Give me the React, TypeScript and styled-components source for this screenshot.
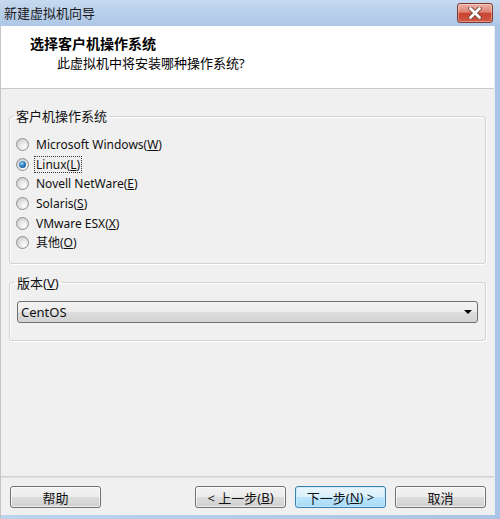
import React from "react";
import styled, { createGlobalStyle } from "styled-components";

const GlobalStyle = createGlobalStyle`
  html, body { margin: 0; padding: 0; background: #ffffff; }
  body { font-family: "Noto Sans", "Noto Sans CJK SC", sans-serif; color: #000; }
  * { box-sizing: border-box; }
`;

const Window = styled.div`
  width: 500px;
  height: 519px;
  display: flex;
  flex-direction: column;
  overflow: hidden;
`;

const TitleBar = styled.div`
  height: 26px;
  flex: none;
  display: flex;
  align-items: center;
  justify-content: space-between;
  padding: 0 7px 0 4px;
  background: linear-gradient(#c6d9ef 0%, #b9cfea 50%, #adc7e6 100%);
`;

const TitleText = styled.span`
  font-size: 13px;
  line-height: 16px;
  color: #1a1a1a;
`;

const CloseButton = styled.div`
  width: 36px;
  height: 20px;
  border: 1px solid #7e3a30;
  border-radius: 3px;
  display: grid;
  place-items: center;
  background: linear-gradient(#eab1a5 0%, #de8574 45%, #c9432f 52%, #cf5a45 100%);
  box-shadow: inset 0 0 0 1px rgba(255, 255, 255, 0.35);
`;

const Frame = styled.div`
  flex: 1;
  display: flex;
  border-left: 1px solid #c4c4c4;
  padding: 0 5px 4px 0;
  background: linear-gradient(90deg, #bcd3ec, #a9c4e4);
`;

const Client = styled.div`
  flex: 1;
  display: flex;
  flex-direction: column;
  background: #f0f0f0;
  border-right: 1px solid #e6edf5;
`;

const Header = styled.div`
  height: 63px;
  flex: none;
  background: #ffffff;
  border-bottom: 1px solid #c9c9c9;
  padding: 9px 0 0 29px;
`;

const HeaderTitle = styled.div`
  font-size: 14px;
  line-height: 17px;
  font-weight: bold;
`;

const HeaderSubtitle = styled.div`
  font-size: 13px;
  line-height: 16px;
  margin: 3px 0 0 27px;
`;

const Content = styled.div`
  flex: 1;
  display: flex;
  flex-direction: column;
  padding: 19px 8px 0 8px;
`;

const Group = styled.fieldset<{ $pad: string; $top: number }>`
  margin: ${(p) => p.$top}px 0 0 0;
  min-width: 0;
  border: 1px solid #d2d2d2;
  border-radius: 3px;
  box-shadow: inset 1px 1px 0 #ffffff, 1px 1px 0 #ffffff;
  padding: ${(p) => p.$pad};
`;

const Legend = styled.legend`
  font-size: 13px;
  line-height: 16px;
  padding: 0 3px;
  margin-left: -3px;
  color: #111;
`;

const RadioList = styled.div`
  display: flex;
  flex-direction: column;
`;

const RadioRow = styled.div`
  height: 19.6px;
  display: flex;
  align-items: center;
  gap: 5px;
`;

const RadioCircle = styled.span`
  width: 13px;
  height: 13px;
  flex: none;
  border-radius: 50%;
  border: 1px solid #8f8f8f;
  background: radial-gradient(circle at 65% 70%, #ffffff 0%, #e6e6e6 40%, #c4c4c4 100%);
  display: grid;
  place-items: center;
`;

const RadioDot = styled.span`
  width: 7px;
  height: 7px;
  border-radius: 50%;
  background: radial-gradient(circle at 40% 35%, #9fd4f5 0%, #2f7fc0 45%, #123f6e 100%);
`;

const RadioLabel = styled.span<{ $focused?: boolean }>`
  font-size: 12px;
  line-height: 15px;
  padding: 0 1px;
  border: 1px dotted ${(p) => (p.$focused ? "#333" : "transparent")};
  color: #111;
`;

const Combo = styled.div`
  height: 22px;
  display: flex;
  align-items: center;
  justify-content: space-between;
  padding: 0 5px 0 3px;
  border: 1px solid #707070;
  border-radius: 3px;
  background: linear-gradient(#f3f3f3 0%, #ebebeb 50%, #dddddd 51%, #d2d2d2 100%);
  font-size: 13px;
  color: #111;
`;

const Footer = styled.div`
  height: 39px;
  flex: none;
  display: flex;
  gap: 9px;
  padding: 9px 8px 0 9px;
  border-top: 1px solid #d2d2d2;
  box-shadow: inset 0 1px 0 #e0e0e0;
`;

const Button = styled.div<{ $primary?: boolean; $push?: boolean }>`
  width: 91px;
  height: 22px;
  display: flex;
  align-items: center;
  justify-content: center;
  font-size: 13px;
  color: #111;
  border-radius: 3px;
  margin-left: ${(p) => (p.$push ? "auto" : "0")};
  border: 1px solid ${(p) => (p.$primary ? "#3c7fb1" : "#707070")};
  background: ${(p) =>
    p.$primary
      ? "linear-gradient(#eaf6fd 0%, #d9f0fc 50%, #bee6fd 51%, #a7d9f5 100%)"
      : "linear-gradient(#f3f3f3 0%, #ebebeb 50%, #dddddd 51%, #cfcfcf 100%)"};
  box-shadow: inset 0 0 0 1px ${(p) => (p.$primary ? "rgba(200,235,255,0.8)" : "rgba(255,255,255,0.7)")};
`;

const options: { pre: string; key: string; post: string; checked?: boolean }[] = [
  { pre: "Microsoft Windows(", key: "W", post: ")" },
  { pre: "Linux(", key: "L", post: ")", checked: true },
  { pre: "Novell NetWare(", key: "E", post: ")" },
  { pre: "Solaris(", key: "S", post: ")" },
  { pre: "VMware ESX(", key: "X", post: ")" },
  { pre: "其他(", key: "O", post: ")" },
];

export default function App() {
  return (
    <>
      <GlobalStyle />
      <Window>
        <TitleBar>
          <TitleText>新建虚拟机向导</TitleText>
          <CloseButton>
            <svg width="14" height="12" viewBox="0 0 14 12">
              <path d="M2.5 1.5 L11.5 10.5 M11.5 1.5 L2.5 10.5" stroke="#6b3a34" strokeWidth="4.4" strokeLinecap="round" />
              <path d="M2.5 1.5 L11.5 10.5 M11.5 1.5 L2.5 10.5" stroke="#ffffff" strokeWidth="2.8" strokeLinecap="round" />
            </svg>
          </CloseButton>
        </TitleBar>
        <Frame>
          <Client>
            <Header>
              <HeaderTitle>选择客户机操作系统</HeaderTitle>
              <HeaderSubtitle>此虚拟机中将安装哪种操作系统?</HeaderSubtitle>
            </Header>
            <Content>
              <Group $top={0} $pad="11px 6px 10px 6px">
                <Legend>客户机操作系统</Legend>
                <RadioList>
                  {options.map((o) => (
                    <RadioRow key={o.key}>
                      <RadioCircle>{o.checked && <RadioDot />}</RadioCircle>
                      <RadioLabel $focused={o.checked}>
                        {o.pre}
                        <u>{o.key}</u>
                        {o.post}
                      </RadioLabel>
                    </RadioRow>
                  ))}
                </RadioList>
              </Group>
              <Group $top={11} $pad="10px 7px 17px 7px">
                <Legend>
                  版本(<u>V</u>)
                </Legend>
                <Combo>
                  <span>CentOS</span>
                  <svg width="8" height="4" viewBox="0 0 8 4">
                    <path d="M0 0 H8 L4 4 Z" fill="#000" />
                  </svg>
                </Combo>
              </Group>
            </Content>
            <Footer>
              <Button>帮助</Button>
              <Button $push>
                &lt; 上一步(<u>B</u>)
              </Button>
              <Button $primary>
                下一步(<u>N</u>) &gt;
              </Button>
              <Button>取消</Button>
            </Footer>
          </Client>
        </Frame>
      </Window>
    </>
  );
}
